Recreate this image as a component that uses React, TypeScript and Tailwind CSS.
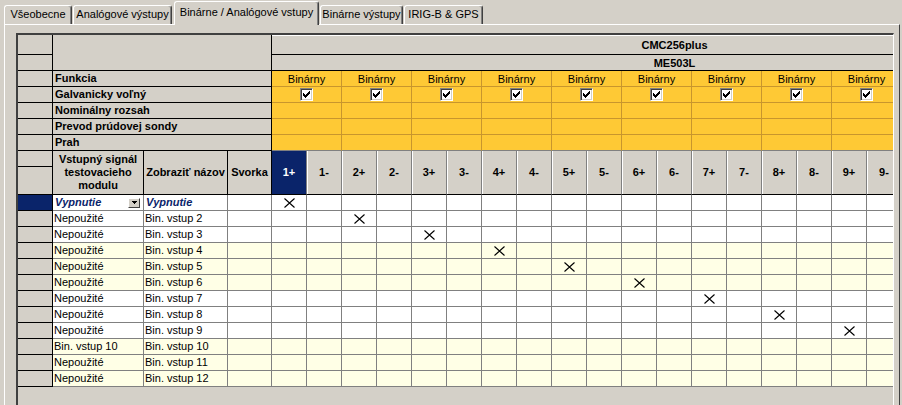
import React from 'react';

const ROWS = [
  { a: 'Vypnutie', b: 'Vypnutie', sel: true },
  { a: 'Nepoužité', b: 'Bin. vstup 2' },
  { a: 'Nepoužité', b: 'Bin. vstup 3' },
  { a: 'Nepoužité', b: 'Bin. vstup 4' },
  { a: 'Nepoužité', b: 'Bin. vstup 5' },
  { a: 'Nepoužité', b: 'Bin. vstup 6' },
  { a: 'Nepoužité', b: 'Bin. vstup 7' },
  { a: 'Nepoužité', b: 'Bin. vstup 8' },
  { a: 'Nepoužité', b: 'Bin. vstup 9' },
  { a: 'Bin. vstup 10', b: 'Bin. vstup 10' },
  { a: 'Nepoužité', b: 'Bin. vstup 11' },
  { a: 'Nepoužité', b: 'Bin. vstup 12' },
];

const CH = Array.from({ length: 18 }, (_, i) => `${Math.floor(i / 2) + 1}${i % 2 === 0 ? '+' : '-'}`);
const PAIRS = Array.from({ length: 9 }, (_, i) => i);

function Check() {
  return (
    <div className="w-[13px] h-[13px] bg-white border border-t-[#808080] border-l-[#808080] border-r-white border-b-white shadow-[inset_1px_1px_0_#404040,inset_-1px_-1px_0_#d4d0c8] flex items-center justify-center">
      <svg width="7" height="7" viewBox="0 0 7 7" shapeRendering="crispEdges">
        <path d="M0 2 L2 4 L6 0 L7 0 L7 3 L2 7 L0 5 Z" fill="black" />
      </svg>
    </div>
  );
}

function XMark() {
  return (
    <svg width="11" height="10" viewBox="0 0 11 10">
      <path d="M0.5 0.5 L10.5 9.5 M10.5 0.5 L0.5 9.5" stroke="black" strokeWidth="1.1" fill="none" />
    </svg>
  );
}

function Tab({ label, cls, active }: { label: string; cls: string; active?: boolean }) {
  if (active) {
    return (
      <div
        className={`${cls} relative z-10 -mb-px h-[24px] bg-[#d4d0c8] border-t border-l border-white border-r border-r-[#404040] shadow-[inset_-1px_0_0_#808080] rounded-t-[3px] text-center pt-[4px] leading-[13px] text-black whitespace-nowrap`}
      >
        {label}
      </div>
    );
  }
  return (
    <div
      className={`${cls} h-[19px] bg-[#d4d0c8] border-t border-l border-white border-r border-r-[#404040] shadow-[inset_-1px_0_0_#808080] rounded-t-[3px] text-center pt-[2px] leading-[13px] text-black whitespace-nowrap`}
    >
      {label}
    </div>
  );
}

export default function App() {
  return (
    <div className="w-[902px] h-[405px] bg-[#d4d0c8] overflow-hidden font-['Liberation_Sans',Arial,sans-serif] text-[11px] text-black">
      {/* Tabs */}
      <div className="flex items-end h-[24px] pl-[4px]">
        <Tab label="Všeobecne" cls="w-[68px]" />
        <Tab label="Analógové výstupy" cls="ml-[1px] w-[99px]" />
        <Tab label="Binárne / Analógové vstupy" cls="ml-[2px] w-[145px]" active />
        <Tab label="Binárne výstupy" cls="ml-[1px] w-[83px]" />
        <Tab label="IRIG-B & GPS" cls="ml-[1px] w-[79px]" />
      </div>

      {/* Panel */}
      <div className="ml-[4px] w-[896px] h-[381px] border-t border-l border-white border-r border-r-[#404040] pl-[11px] pt-[8px]">
        <div className="w-[878px] h-[380px] overflow-hidden border-l-2 border-t-2 border-[#404040] border-r border-r-white bg-[#d4d0c8]">
          <div className="w-[1100px]">
            {/* Rows 1-2 */}
            <div className="flex">
              <div className="flex flex-col">
                <div className="w-[35px] h-[20px] border-r border-b border-black" />
                <div className="w-[35px] h-[16px] border-r border-b border-black" />
              </div>
              <div className="w-[219px] h-[36px] border-r border-b border-black" />
              <div className="flex flex-col w-[805px] shadow-[inset_0_1px_0_#ffffff]">
                <div className="h-[20px] border-b border-black flex items-center justify-center font-bold leading-[14px] pt-[1px]">
                  CMC256plus
                </div>
                <div className="h-[16px] border-b border-black flex items-center justify-center font-bold leading-[14px]">
                  ME503L
                </div>
              </div>
            </div>

            {/* Orange rows */}
            {['Funkcia', 'Galvanicky voľný', 'Nominálny rozsah', 'Prevod prúdovej sondy', 'Prah'].map((label, ri) => (
              <div className="flex h-[16px]" key={label}>
                <div className="w-[35px] h-[16px] border-r border-b border-black" />
                <div className="w-[219px] h-[16px] border-r border-b border-black pl-[2px] font-bold leading-[15px] whitespace-nowrap">
                  {label}
                </div>
                <div className="flex">
                  {PAIRS.map((p) => (
                    <div
                      key={p}
                      className={`w-[70px] h-[16px] bg-[#fec935] border-r border-r-[#c8962d] border-b ${ri === 4 ? 'border-b-[#808080]' : 'border-b-[#c8962d]'} flex items-center justify-center leading-[14px]`}
                    >
                      {ri === 0 && <span>Binárny</span>}
                      {ri === 1 && <Check />}
                    </div>
                  ))}
                </div>
              </div>
            ))}

            {/* Header row */}
            <div className="flex h-[44px]">
              <div className="flex flex-col">
                <div className="w-[35px] h-[16px] border-r border-b border-black" />
                <div className="w-[35px] h-[28px] border-r border-b border-black" />
              </div>
              <div className="w-[91px] h-[44px] border-r border-b border-black flex items-center justify-center text-center font-bold leading-[13px]">
                Vstupný signál
                <br />
                testovacieho
                <br />
                modulu
              </div>
              <div className="w-[84px] h-[44px] border-r border-b border-black flex items-center justify-center font-bold leading-[13px] whitespace-nowrap">
                Zobraziť názov
              </div>
              <div className="w-[44px] h-[44px] border-r border-b border-black flex items-center justify-center font-bold leading-[13px]">
                Svorka
              </div>
              {CH.map((c, i) =>
                i === 0 ? (
                  <div
                    key={c}
                    className="w-[35px] h-[44px] bg-[#0a246a] text-white border-r border-r-[#808080] border-b border-black flex items-center justify-center font-bold"
                  >
                    {c}
                  </div>
                ) : (
                  <div
                    key={c}
                    className="w-[35px] h-[44px] border-r border-r-[#808080] border-b border-black shadow-[inset_1px_0_0_#ffffff] flex items-center justify-center font-bold"
                  >
                    {c}
                  </div>
                )
              )}
            </div>

            {/* Data rows */}
            {ROWS.map((r, ri) => {
              const yellow = Math.floor(ri / 3) % 2 === 1;
              const bg = yellow ? 'bg-[#ffffe6]' : 'bg-white';
              return (
                <div className="flex h-[16px]" key={ri}>
                  <div
                    className={`w-[35px] h-[16px] border-r border-b border-black ${r.sel ? 'bg-[#0a246a]' : 'bg-[#d4d0c8]'}`}
                  />
                  <div
                    className={`w-[91px] h-[16px] border-r border-b border-[#808080] ${bg} pl-[1px] leading-[15px] whitespace-nowrap flex items-center justify-between`}
                  >
                    {r.sel ? (
                      <>
                        <span className="font-bold italic text-[#0a246a] pl-[1px]">{r.a}</span>
                        <div className="mr-[3px] w-[12px] h-[10px] bg-[#d4d0c8] border border-t-white border-l-white border-r-[#404040] border-b-[#404040] flex items-center justify-center">
                          <svg width="5" height="3" viewBox="0 0 5 3" shapeRendering="crispEdges">
                            <path d="M0 0 H5 L2.5 3 Z" fill="black" />
                          </svg>
                        </div>
                      </>
                    ) : (
                      <span>{r.a}</span>
                    )}
                  </div>
                  <div
                    className={`w-[84px] h-[16px] border-r border-b border-[#808080] ${bg} pl-[1px] leading-[15px] whitespace-nowrap`}
                  >
                    {r.sel ? <span className="font-bold italic text-[#0a246a] pl-[1px]">{r.b}</span> : r.b}
                  </div>
                  <div className={`w-[44px] h-[16px] border-r border-b border-[#808080] ${bg}`} />
                  {CH.map((c, ci) => (
                    <div
                      key={c}
                      className={`w-[35px] h-[16px] border-r border-b border-[#808080] ${bg} flex items-center justify-center`}
                    >
                      {ri < 9 && ci === ri * 2 && <XMark />}
                    </div>
                  ))}
                </div>
              );
            })}
          </div>
        </div>
      </div>
    </div>
  );
}
